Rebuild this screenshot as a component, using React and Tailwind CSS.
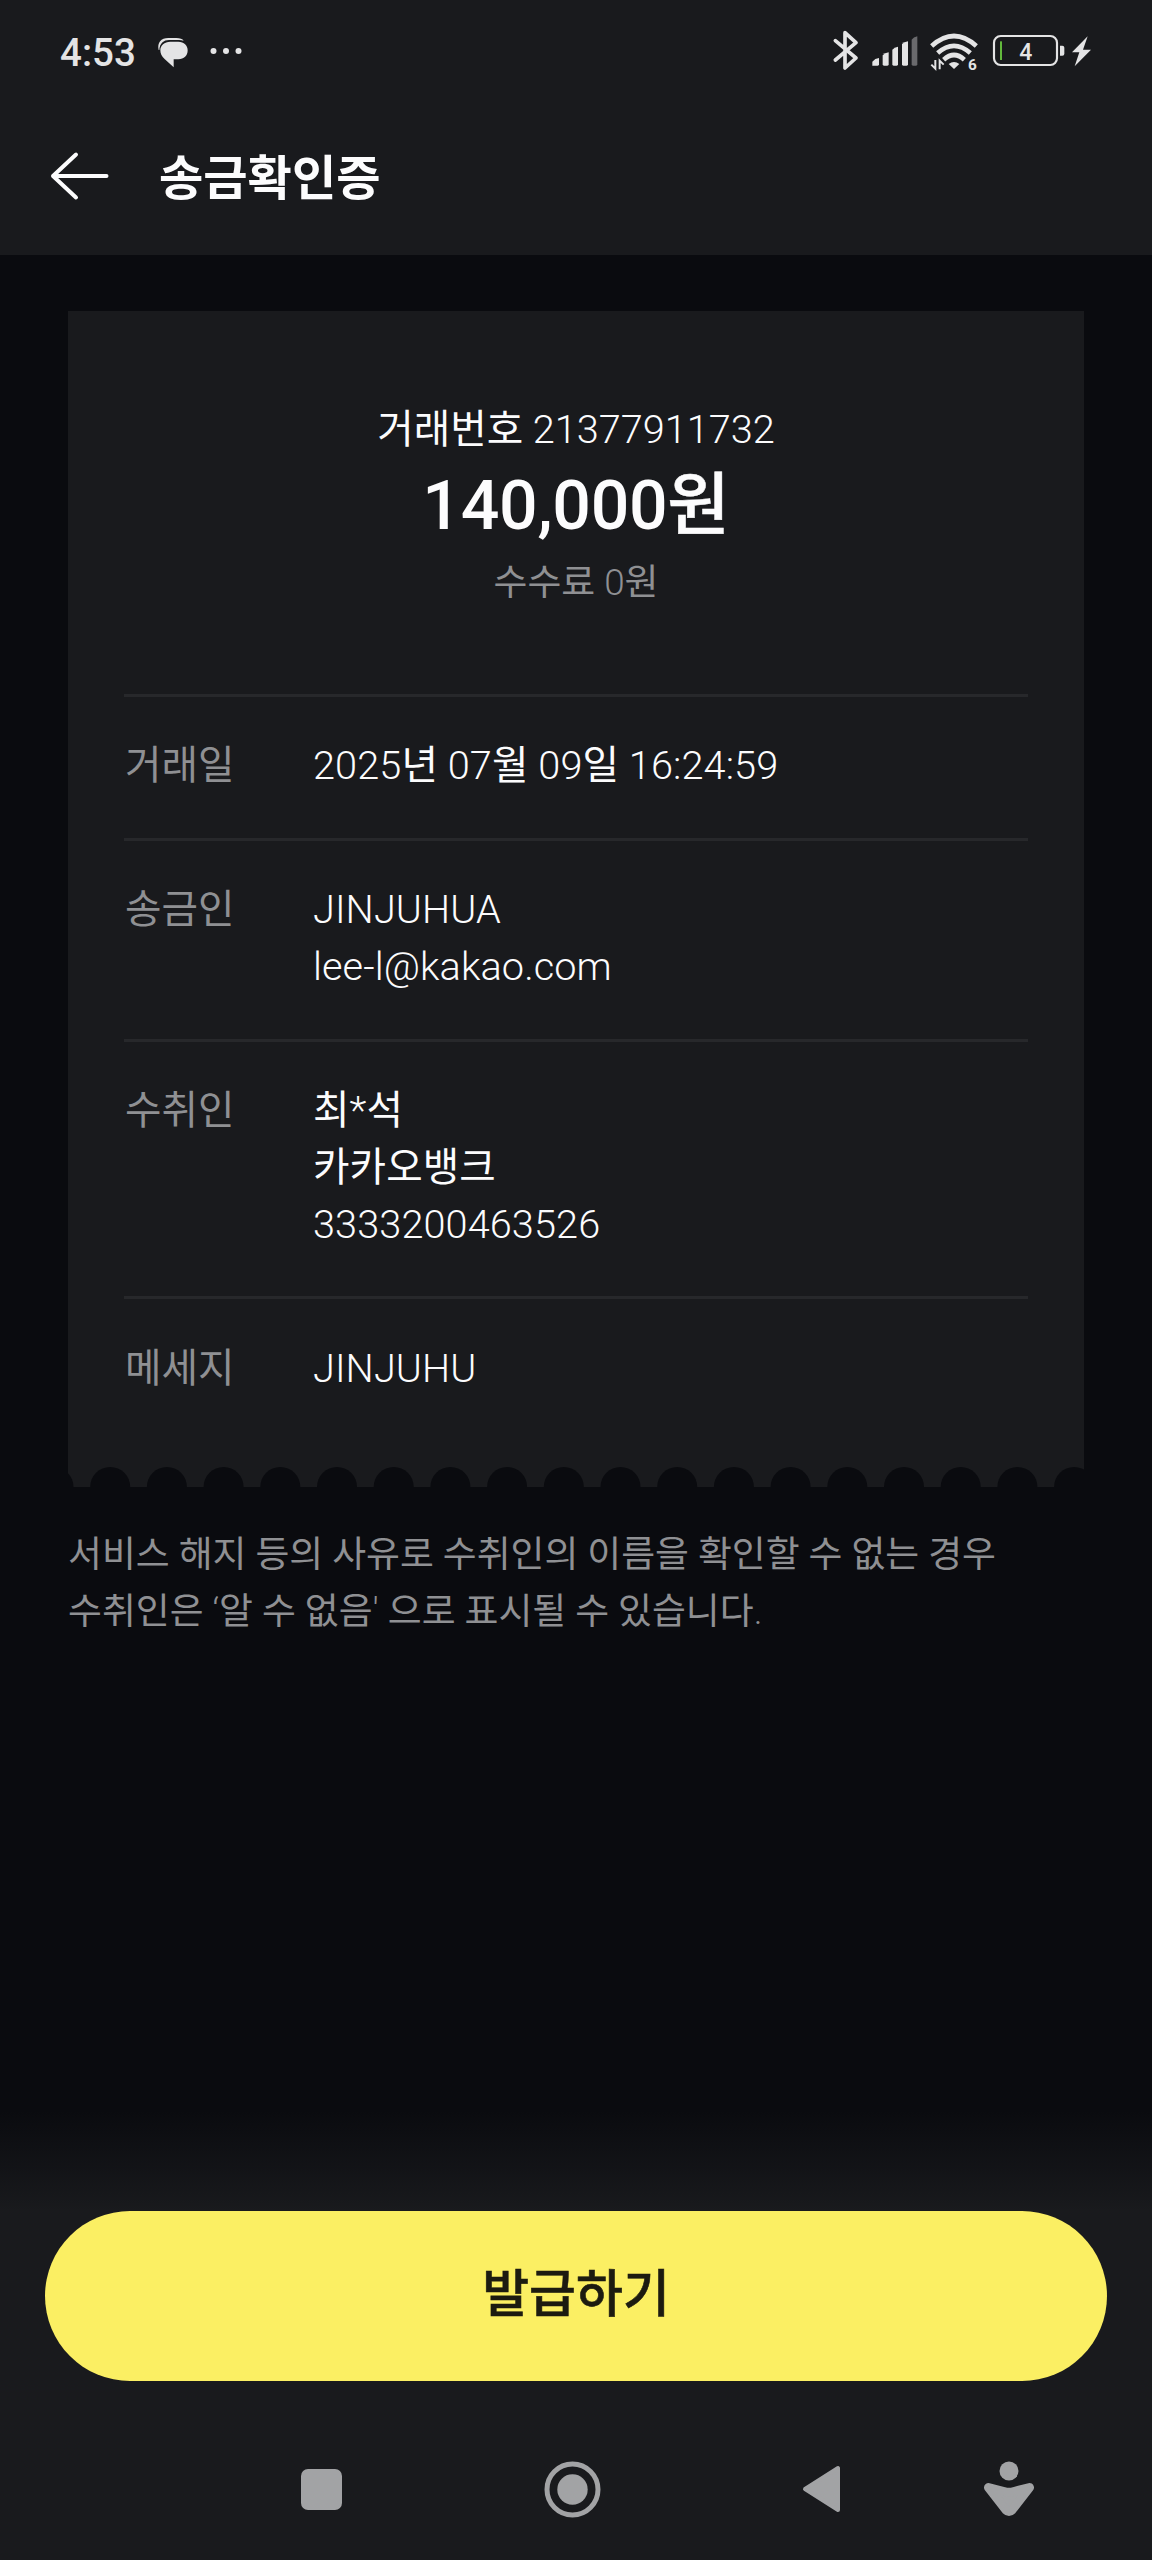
import clsx from "clsx";

const rows = [
  { label: "거래일", values: ["2025년 07월 09일 16:24:59"] },
  { label: "송금인", values: ["JINJUHUA", "lee-l@kakao.com"] },
  { label: "수취인", values: ["최*석", "카카오뱅크", "3333200463526"] },
  { label: "메세지", values: ["JINJUHU"] },
];

// Hangul is set in regular weight next to light latin and digits
const Mixed = ({ text }) => {
  return text.split(/([가-힣]+)/).map((part, i) =>
    i % 2 ? (
      <span key={i} className="font-normal">
        {part}
      </span>
    ) : (
      part
    )
  );
};

const StatusBar = () => {
  return (
    <div className="h-[100px] flex items-start text-[#e4e4e5]">
      <span className="ml-[60px] mt-[30px] text-[38.5px] leading-[45px] font-medium">4:53</span>

      {/* Chat bubbles */}
      <svg className="ml-[21px] mt-[37px]" width="32" height="31" viewBox="472 111 96 93" fill="currentColor">
        <path d="M477 150C472 128 484 114 506 114H530C541 114 549 117 552 122C544 119 538 120 528 120H508C492 120 480 130 479 150Z" />
        <path d="M512 125H536C553 125 564 136 564 151C564 167 553 178 536 178H522V202L494 176C486 169 482 160 482 151C482 136 494 125 512 125Z" />
      </svg>

      {/* More notifications */}
      <svg className="ml-[20px] mt-[47px]" width="33" height="8" viewBox="0 0 33 8" fill="currentColor">
        <circle cx="4.500" cy="4" r="3" />
        <circle cx="17" cy="4" r="3" />
        <circle cx="29.500" cy="4" r="3" />
      </svg>

      <div className="ml-auto mr-[59px] mt-[30px] flex items-start">
        {/* Bluetooth */}
        <svg width="28" height="41" viewBox="96 90 84 123" fill="none" stroke="currentColor" strokeWidth="11" strokeLinecap="round" strokeLinejoin="round">
          <path d="M106 122L168 174L135 204V98L168 128L106 180" />
        </svg>

        {/* Mobile signal */}
        <svg className="ml-[11px] mt-[6px]" width="48" height="31" viewBox="213 108 144 93" fill="currentColor">
          <path d="M217 197V185Q225 175 237 174V193Q237 197 233 197Z" />
          <path d="M248 193V166Q254 159 266 157V193Q266 197 262 197H252Q248 197 248 193Z" />
          <path d="M277 193V149Q283 142 294 140V193Q294 197 290 197H281Q277 197 277 193Z" />
          <path d="M306 193V132Q312 126 324 124V193Q324 197 320 197H310Q306 197 306 193Z" />
          <path d="M335 193V119Q340 111 352 109V193Q352 197 348 197H339Q335 197 335 193Z" opacity="0.4" />
        </svg>

        {/* Wi-Fi with traffic arrows */}
        <svg className="ml-[10px] mt-[3px] overflow-visible" width="50" height="38" viewBox="387 97 150 114">
          <g fill="none" stroke="currentColor" strokeWidth="14">
            <path d="M395 136Q462 76 529 136" />
            <path d="M413 157Q462 114 511 157" />
            <path d="M431 177Q462 149 493 177" />
          </g>
          <path d="M446 190Q462 178 478 190L462 205Z" fill="currentColor" />
          <path d="M406 178V204L394 192M419 206V180L431 192" fill="none" stroke="currentColor" strokeWidth="6" />
          <text x="504" y="207" fontSize="46" fontWeight="700" fill="currentColor" fontFamily="Roboto">6</text>
        </svg>

        {/* Battery */}
        <svg className="ml-[13px] mt-[4px] overflow-visible" width="74" height="34" viewBox="576 102 222 102">
          <rect x="582" y="108" width="189" height="87" rx="20" fill="none" stroke="currentColor" strokeWidth="6.5" />
          <rect x="600" y="124" width="6" height="56" fill="#62b83c" />
          <path d="M780 137H787Q793 137 793 143V161Q793 167 787 167H780Z" fill="currentColor" />
          <text x="677" y="180" textAnchor="middle" fontSize="69" fontWeight="500" fill="currentColor" fontFamily="Roboto">4</text>
        </svg>
        <svg className="ml-[5px] mt-[5px]" width="22" height="33" viewBox="814 105 66 99" fill="currentColor">
          <path d="M864 109L817 157H839L825 199L874 149H850Z" />
        </svg>
      </div>
    </div>
  );
};

const Header = () => {
  return (
    <header className="h-[255px] bg-[#191a1d]">
      <StatusBar />
      <div className="flex items-center h-[155px] pl-[50px]">
        <svg className="-mt-[4px]" width="60" height="50" viewBox="0 0 60 50" fill="none" stroke="#fcfcfd" strokeWidth="4" strokeLinecap="round" strokeLinejoin="round">
          <path d="M56.500 25H3M26 3.500L3 25L26 46.500" />
        </svg>
        <h1 className="ml-[49px] mt-[3px] text-[48.170px] leading-[56px] font-bold text-[#fcfcfd]">송금확인증</h1>
      </div>
    </header>
  );
};

const Row = ({ label, values, first }) => {
  return (
    <div className={clsx("flex border-t-[3px] border-[#27282b] pt-[41.500px] leading-[56.670px] text-[39.670px]", first ? "" : "mt-[43px]")}>
      <div className="w-[188px] ml-px text-[#8f9093]">{label}</div>
      <div className="text-[#fcfcfd] font-light tracking-[0.1px]">
        {values.map((v) => (
          <div key={v}>
            <Mixed text={v} />
          </div>
        ))}
      </div>
    </div>
  );
};

// Torn paper edge at the bottom of the receipt
const TornEdge = () => {
  return (
    <svg className="block" width="1016" height="21" viewBox="0 0 1016 21">
      <rect width="1016" height="21" fill="#191a1d" />
      {Array.from({ length: 19 }, (_, i) => (
        <circle key={i} cx={-14.5 + i * 56.7} cy="21" r="20" fill="#0a0b0f" />
      ))}
    </svg>
  );
};

const Receipt = () => {
  return (
    <section className="mx-[68px] mt-[56px]">
      <div className="h-[1155px] px-[56px] pt-[90.500px] bg-[#191a1d]">
        <div className="text-center mb-[82.500px]">
          <p className="text-[39.670px] leading-[56.670px] font-light text-[#fcfcfd]">
            <Mixed text="거래번호 21377911732" />
          </p>
          <p className="text-[68px] leading-[96px] font-medium text-[#fcfcfd] tracking-[-0.3px]">
            140,000<span className="[-webkit-text-stroke:0.5px_#fcfcfd]">원</span>
          </p>
          <p className="mt-px text-[36.830px] leading-[56px] font-light text-[#8f9093]">
            <Mixed text="수수료 0원" />
          </p>
        </div>
        {rows.map((row, i) => (
          <Row key={row.label} first={i === 0} {...row} />
        ))}
      </div>
      <TornEdge />
      <p className="mt-[40px] text-[36.830px] leading-[56.670px] font-light text-[#8f9093]">
        <Mixed text="서비스 해지 등의 사유로 수취인의 이름을 확인할 수 없는 경우" />
        <br />
        <Mixed text="수취인은 ‘알 수 없음' 으로 표시될 수 있습니다." />
      </p>
    </section>
  );
};

const NavBar = () => {
  return (
    <nav className="h-[142px] mt-auto flex items-center pl-[301px] pr-[117px] text-[#a2a3a5]">
      <div className="w-[41px] h-[41px] rounded-[7px] bg-[#a2a3a5]"></div>
      <svg className="ml-[202px]" width="57" height="57" viewBox="0 0 57 57">
        <circle cx="28.500" cy="28.500" r="25.500" fill="none" stroke="currentColor" strokeWidth="5" />
        <circle cx="28.500" cy="28.500" r="15.200" fill="currentColor" />
      </svg>
      <svg className="ml-[201px]" width="38" height="48" viewBox="0 0 38 48">
        <path d="M3 24L36 3V45Z" fill="currentColor" stroke="currentColor" strokeWidth="4" strokeLinejoin="round" />
      </svg>
      <svg className="ml-auto" width="52" height="56" viewBox="0 0 52 56" fill="currentColor">
        <circle cx="26" cy="10" r="9.500" />
        <path d="M5.500 26.500L21 30.500Q26 32 31 30.500L46.500 26.500L29 49Q26 52 23 49Z" stroke="currentColor" strokeWidth="9" strokeLinejoin="round" />
      </svg>
    </nav>
  );
};

const App = () => {
  return (
    <div
      className="w-[1152px] h-[2560px] flex flex-col overflow-hidden bg-[#0a0b0f]"
      style={{ fontFamily: "Roboto, 'Noto Sans CJK KR', sans-serif" }}
    >
      <Header />
      <Receipt />
      <div className="mt-auto h-[100px] bg-linear-to-b from-[#0a0b0f] to-[#191a1d]"></div>
      <footer className="h-[349px] flex flex-col bg-[#191a1d]">
        <button className="mx-[45px] h-[170px] pb-[3px] rounded-full bg-[#fbef63] text-[#1c1b10] text-[51px] leading-[60px] font-medium [-webkit-text-stroke:0.6px_#1c1b10]">
          발급하기
        </button>
        <NavBar />
      </footer>
    </div>
  );
};

export default App;
